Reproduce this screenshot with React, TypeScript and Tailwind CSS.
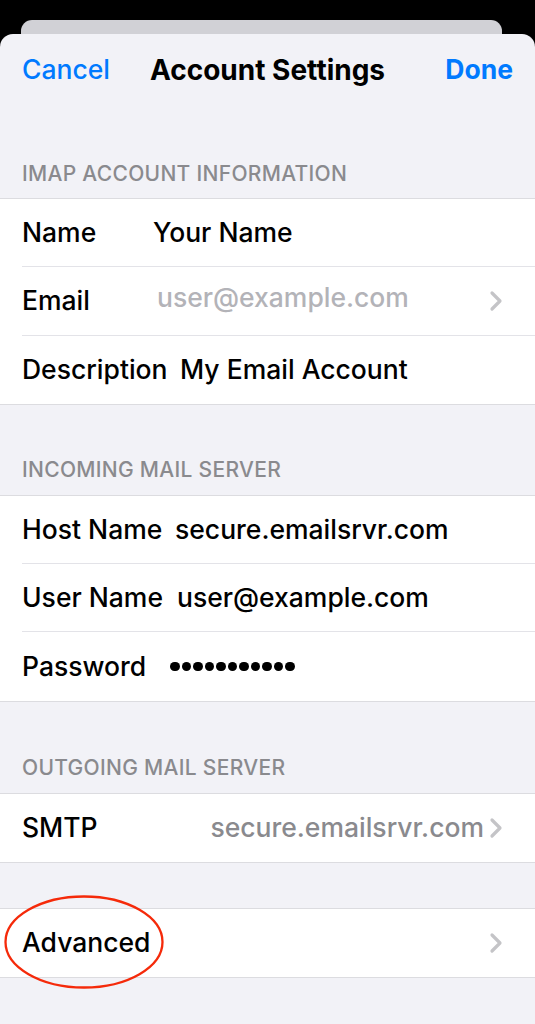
import React from "react";

const Chevron = () => (
  <svg width="16" height="22" viewBox="0 0 16 22" className="shrink-0">
    <path d="M4 3 L12 11 L4 19" fill="none" stroke="#c4c4c7" strokeWidth="3.2" strokeLinecap="round" strokeLinejoin="round" />
  </svg>
);

type Row = {
  label: string;
  labelW: string;
  value?: string;
  valueClass?: string;
  chevron?: boolean;
  dots?: boolean;
};

const Header = ({ text, className }: { text: string; className: string }) => (
  <div className={"px-[22px] text-[21px] leading-[20px] text-[#8a8a8e] font-[450] tracking-[0.3px] " + className}>{text}</div>
);

const Group = ({ rows }: { rows: Row[] }) => (
  <div className="bg-white border-y border-[#dcdce0]">
    {rows.map((r, i) => (
      <div key={r.label} className="pl-[22px]">
        <div
          className={
            "h-[68.3px] flex items-center pr-[31px] " +
            (i < rows.length - 1 ? "border-b border-[#e3e3e8]" : "")
          }
        >
          <div className={"shrink-0 text-[26.5px] font-[450] text-black " + r.labelW}>{r.label}</div>
          {r.dots ? (
            <div className="flex items-center gap-[2px]">
              {Array.from({ length: 11 }).map((_, k) => (
                <span key={k} className="block w-[9.5px] h-[9.5px] rounded-full bg-black" />
              ))}
            </div>
          ) : (
            <div className={"flex-1 text-[26.5px] font-[450] whitespace-nowrap " + (r.valueClass ?? "text-black")}>{r.value}</div>
          )}
          {r.chevron && <Chevron />}
        </div>
      </div>
    ))}
  </div>
);

export default function App() {
  return (
    <div
      className="relative w-[535px] h-[1024px] bg-black overflow-hidden"
      style={{ fontFamily: "Inter, 'Noto Sans', sans-serif" }}
    >
      <div className="pt-[20px] px-[21px] h-[34px]">
        <div className="h-[30px] bg-[#d1d1d6] rounded-t-[11px] w-[481px]" />
      </div>
      <div className="relative bg-[#f2f2f7] rounded-t-[13px] h-[990px]">
        <div className="h-[72px] grid grid-cols-[1fr_auto_1fr] items-center px-[22px]">
          <span className="justify-self-start text-[26.5px] font-[450] text-[#007aff]">Cancel</span>
          <span className="text-[28px] font-bold text-black">Account Settings</span>
          <span className="justify-self-end text-[26.5px] font-bold text-[#007aff]">Done</span>
        </div>
        <Header text="IMAP ACCOUNT INFORMATION" className="pt-[58px] pb-[14px]" />
        <Group
          rows={[
            { label: "Name", labelW: "w-[131px]", value: "Your Name" },
            { label: "Email", labelW: "w-[135px]", value: "user@example.com", valueClass: "text-[#b3b3b8] -mt-[6px]", chevron: true },
            { label: "Description", labelW: "w-[158px]", value: "My Email Account" },
          ]}
        />
        <Header text="INCOMING MAIL SERVER" className="pt-[55px] pb-[15px]" />
        <Group
          rows={[
            { label: "Host Name", labelW: "w-[153px]", value: "secure.emailsrvr.com" },
            { label: "User Name", labelW: "w-[155px]", value: "user@example.com" },
            { label: "Password", labelW: "w-[148px]", dots: true },
          ]}
        />
        <Header text="OUTGOING MAIL SERVER" className="pt-[56px] pb-[15px]" />
        <Group
          rows={[
            { label: "SMTP", labelW: "w-[131px]", value: "secure.emailsrvr.com", valueClass: "text-[#8a8a8e] text-right pr-[4px]", chevron: true },
          ]}
        />
        <div className="h-[45px]" />
        <Group rows={[{ label: "Advanced", labelW: "w-[131px]", value: "", chevron: true }]} />
      </div>
      <svg className="absolute left-0 top-[890px] pointer-events-none" width="175" height="105" viewBox="0 0 175 105">
        <ellipse cx="84" cy="52" rx="78.5" ry="45.5" fill="none" stroke="#f52a0a" strokeWidth="2.3" />
      </svg>
    </div>
  );
}
